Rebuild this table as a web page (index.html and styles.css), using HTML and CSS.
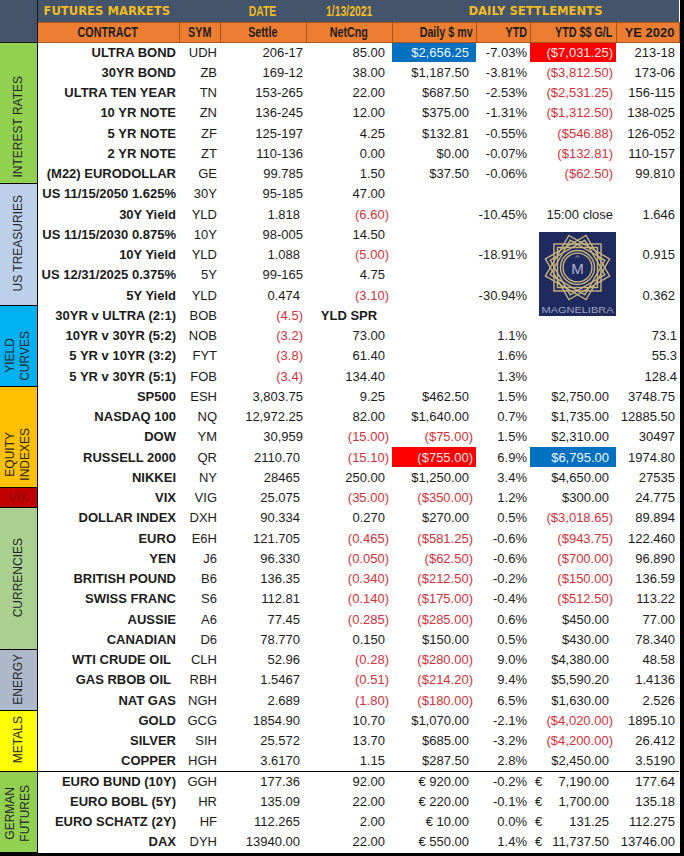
FILE: index.html
```html
<!DOCTYPE html>
<html lang="en">
<head>
<meta charset="utf-8">
<title>Futures Markets - Daily Settlements</title>
<link rel="stylesheet" href="styles.css">
</head>
<body>
<div class="sheet">
<table class="grid">
<colgroup>
<col class="w-side"><col class="w-con"><col class="w-sym"><col class="w-set"><col class="w-net"><col class="w-day"><col class="w-ytd"><col class="w-gl"><col class="w-ye">
</colgroup>
<thead>
<tr class="title">
<td class="corner" rowspan="2"></td>
<td class="tl">FUTURES MARKETS</td>
<td></td>
<td class="tc"><span class="nx mid">DATE</span></td>
<td class="tc"><span class="nx mid">1/13/2021</span></td>
<td class="tc" colspan="4">DAILY SETTLEMENTS</td>
</tr>
<tr class="head">
<td class="hc"><span class="nx mid">CONTRACT</span></td>
<td class="hc"><span class="nx mid">SYM</span></td>
<td class="hc"><span class="nx mid">Settle</span></td>
<td class="hc"><span class="nx mid">NetCng</span></td>
<td><span class="nx">Daily $ mv</span></td>
<td><span class="nx">YTD</span></td>
<td><span class="nx">YTD $$ G/L</span></td>
<td class="hy">YE 2020</td>
</tr>
</thead>
<tbody>
<tr>
<td class="sb ir bot" rowspan="7"><span class="vt">INTEREST RATES</span></td>
<td class="c">ULTRA BOND</td><td>UDH</td><td>206-17</td><td class="a">85.00</td><td class="a hb">$2,656.25</td><td>-7.03%</td><td class="n hr">($7,031.25)</td><td class="y">213-18</td>
</tr>
<tr><td class="c">30YR BOND</td><td>ZB</td><td>169-12</td><td class="a">38.00</td><td class="a">$1,187.50</td><td>-3.81%</td><td class="n">($3,812.50)</td><td class="y">173-06</td></tr>
<tr><td class="c">ULTRA TEN YEAR</td><td>TN</td><td>153-265</td><td class="a">22.00</td><td class="a">$687.50</td><td>-2.53%</td><td class="n">($2,531.25)</td><td class="y">156-115</td></tr>
<tr><td class="c">10 YR NOTE</td><td>ZN</td><td>136-245</td><td class="a">12.00</td><td class="a">$375.00</td><td>-1.31%</td><td class="n">($1,312.50)</td><td class="y">138-025</td></tr>
<tr><td class="c">5 YR NOTE</td><td>ZF</td><td>125-197</td><td class="a">4.25</td><td class="a">$132.81</td><td>-0.55%</td><td class="n">($546.88)</td><td class="y">126-052</td></tr>
<tr><td class="c">2 YR NOTE</td><td>ZT</td><td>110-136</td><td class="a">0.00</td><td class="a">$0.00</td><td>-0.07%</td><td class="n">($132.81)</td><td class="y">110-157</td></tr>
<tr><td class="c">(M22) EURODOLLAR</td><td>GE</td><td>99.785</td><td class="a">1.50</td><td class="a">$37.50</td><td>-0.06%</td><td class="n">($62.50)</td><td class="y">99.810</td></tr>

<tr>
<td class="sb ust" rowspan="6"><span class="vt">US TREASURIES</span></td>
<td class="c">US 11/15/2050 1.625%</td><td>30Y</td><td>95-185</td><td class="a">47.00</td><td></td><td></td><td></td><td></td>
</tr>
<tr><td class="c">30Y Yield</td><td>YLD</td><td class="q">1.818</td><td class="n">(6.60)</td><td></td><td>-10.45%</td><td class="note">15:00 close</td><td class="y">1.646</td></tr>
<tr><td class="c">US 11/15/2030 0.875%</td><td>10Y</td><td>98-005</td><td class="a">14.50</td><td></td><td></td><td></td><td></td></tr>
<tr><td class="c">10Y Yield</td><td>YLD</td><td class="q">1.088</td><td class="n">(5.00)</td><td></td><td>-18.91%</td><td></td><td class="y">0.915</td></tr>
<tr><td class="c">US 12/31/2025 0.375%</td><td>5Y</td><td>99-165</td><td class="a">4.75</td><td></td><td></td><td></td><td></td></tr>
<tr><td class="c">5Y Yield</td><td>YLD</td><td class="q">0.474</td><td class="n">(3.10)</td><td></td><td>-30.94%</td><td></td><td class="y">0.362</td></tr>

<tr>
<td class="sb yc bot2" rowspan="4"><span class="vt two">YIELD<br>CURVES</span></td>
<td class="c">30YR v ULTRA (2:1)</td><td>BOB</td><td class="n">(4.5)</td><td class="ys">YLD SPR</td><td></td><td></td><td></td><td></td>
</tr>
<tr><td class="c">10YR v 30YR (5:2)</td><td>NOB</td><td class="n">(3.2)</td><td class="a">73.00</td><td></td><td>1.1%</td><td></td><td class="yw">73.1</td></tr>
<tr><td class="c">5 YR v 10YR (3:2)</td><td>FYT</td><td class="n">(3.8)</td><td class="a">61.40</td><td></td><td>1.6%</td><td></td><td class="yw">55.3</td></tr>
<tr><td class="c">5 YR v 30YR (5:1)</td><td>FOB</td><td class="n">(3.4)</td><td class="a">134.40</td><td></td><td>1.3%</td><td></td><td class="yw">128.4</td></tr>

<tr>
<td class="sb eq bot" rowspan="5"><span class="vt two">EQUITY<br>INDEXES</span></td>
<td class="c">SP500</td><td>ESH</td><td>3,803.75</td><td class="a">9.25</td><td class="a">$462.50</td><td>1.5%</td><td class="a">$2,750.00</td><td class="y">3748.75</td>
</tr>
<tr><td class="c">NASDAQ 100</td><td>NQ</td><td>12,972.25</td><td class="a">82.00</td><td class="a">$1,640.00</td><td>0.7%</td><td class="a">$1,735.00</td><td class="y">12885.50</td></tr>
<tr><td class="c">DOW</td><td>YM</td><td>30,959</td><td class="n">(15.00)</td><td class="n">($75.00)</td><td>1.5%</td><td class="a">$2,310.00</td><td class="y">30497</td></tr>
<tr><td class="c">RUSSELL 2000</td><td>QR</td><td class="q">2110.70</td><td class="n">(15.10)</td><td class="n hr">($755.00)</td><td>6.9%</td><td class="a hb">$6,795.00</td><td class="y">1974.80</td></tr>
<tr><td class="c">NIKKEI</td><td>NY</td><td class="q">28465</td><td class="a">250.00</td><td class="a">$1,250.00</td><td>3.4%</td><td class="a">$4,650.00</td><td class="y">27535</td></tr>

<tr>
<td class="sb vix">VIX</td>
<td class="c">VIX</td><td>VIG</td><td class="q">25.075</td><td class="n">(35.00)</td><td class="n">($350.00)</td><td>1.2%</td><td class="a">$300.00</td><td class="y">24.775</td>
</tr>

<tr>
<td class="sb cur" rowspan="7"><span class="vt">CURRENCIES</span></td>
<td class="c">DOLLAR INDEX</td><td>DXH</td><td class="q">90.334</td><td class="a">0.270</td><td class="a">$270.00</td><td>0.5%</td><td class="n">($3,018.65)</td><td class="y">89.894</td>
</tr>
<tr><td class="c">EURO</td><td>E6H</td><td class="q">121.705</td><td class="n">(0.465)</td><td class="n">($581.25)</td><td>-0.6%</td><td class="n">($943.75)</td><td class="y">122.460</td></tr>
<tr><td class="c">YEN</td><td>J6</td><td class="q">96.330</td><td class="n">(0.050)</td><td class="n">($62.50)</td><td>-0.6%</td><td class="n">($700.00)</td><td class="y">96.890</td></tr>
<tr><td class="c">BRITISH POUND</td><td>B6</td><td class="q">136.35</td><td class="n">(0.340)</td><td class="n">($212.50)</td><td>-0.2%</td><td class="n">($150.00)</td><td class="y">136.59</td></tr>
<tr><td class="c">SWISS FRANC</td><td>S6</td><td class="q">112.81</td><td class="n">(0.140)</td><td class="n">($175.00)</td><td>-0.4%</td><td class="n">($512.50)</td><td class="y">113.22</td></tr>
<tr><td class="c">AUSSIE</td><td>A6</td><td class="q">77.45</td><td class="n">(0.285)</td><td class="n">($285.00)</td><td>0.6%</td><td class="a">$450.00</td><td class="y">77.00</td></tr>
<tr><td class="c">CANADIAN</td><td>D6</td><td class="q">78.770</td><td class="a">0.150</td><td class="a">$150.00</td><td>0.5%</td><td class="a">$430.00</td><td class="y">78.340</td></tr>

<tr>
<td class="sb en" rowspan="3"><span class="vt">ENERGY</span></td>
<td class="c cx">WTI CRUDE OIL</td><td>CLH</td><td class="q">52.96</td><td class="n">(0.28)</td><td class="n">($280.00)</td><td>9.0%</td><td class="a">$4,380.00</td><td class="y">48.58</td>
</tr>
<tr><td class="c cx">GAS RBOB OIL</td><td>RBH</td><td class="q">1.5467</td><td class="n">(0.51)</td><td class="n">($214.20)</td><td>9.4%</td><td class="a">$5,590.20</td><td class="y">1.4136</td></tr>
<tr><td class="c">NAT GAS</td><td>NGH</td><td class="q">2.689</td><td class="n">(1.80)</td><td class="n">($180.00)</td><td>6.5%</td><td class="a">$1,630.00</td><td class="y">2.526</td></tr>

<tr>
<td class="sb me" rowspan="3"><span class="vt">METALS</span></td>
<td class="c">GOLD</td><td>GCG</td><td class="q">1854.90</td><td class="a">10.70</td><td class="a">$1,070.00</td><td>-2.1%</td><td class="n">($4,020.00)</td><td class="y">1895.10</td>
</tr>
<tr><td class="c">SILVER</td><td>SIH</td><td class="q">25.572</td><td class="a">13.70</td><td class="a">$685.00</td><td>-3.2%</td><td class="n">($4,200.00)</td><td class="y">26.412</td></tr>
<tr class="cut"><td class="c">COPPER</td><td>HGH</td><td class="q">3.6170</td><td class="a">1.15</td><td class="a">$287.50</td><td>2.8%</td><td class="a">$2,450.00</td><td class="y">3.5190</td></tr>

<tr>
<td class="sb de bot3" rowspan="4"><span class="vt two">GERMAN<br>FUTURES</span></td>
<td class="c">EURO BUND (10Y)</td><td>GGH</td><td class="q">177.36</td><td class="a">92.00</td><td class="a">€ 920.00</td><td>-0.2%</td><td class="a"><span class="eur">€</span>7,190.00</td><td class="y">177.64</td>
</tr>
<tr><td class="c">EURO BOBL (5Y)</td><td>HR</td><td class="q">135.09</td><td class="a">22.00</td><td class="a">€ 220.00</td><td>-0.1%</td><td class="a"><span class="eur">€</span>1,700.00</td><td class="y">135.18</td></tr>
<tr><td class="c">EURO SCHATZ (2Y)</td><td>HF</td><td class="q">112.265</td><td class="a">2.00</td><td class="a">€ 10.00</td><td>0.0%</td><td class="a"><span class="eur">€</span>131.25</td><td class="y">112.275</td></tr>
<tr><td class="c">DAX</td><td>DYH</td><td class="q">13940.00</td><td class="a">22.00</td><td class="a">€ 550.00</td><td>1.4%</td><td class="a"><span class="eur">€</span>11,737.50</td><td class="y">13746.00</td></tr>
</tbody>
</table>

<svg class="logo" viewBox="0 0 77 84" width="77" height="84" aria-label="Magnelibra logo">
<rect width="77" height="84" fill="#1f2b5e"/>
<g fill="none" stroke="#c9b47e" stroke-width="1.4" transform="translate(38.5 35.5)">
<g id="sq">
<rect x="-23.5" y="-23.5" width="47" height="47"/>
<rect x="-20" y="-20" width="40" height="40"/>
</g>
<use href="#sq" transform="rotate(30)"/>
<use href="#sq" transform="rotate(60)"/>
<circle r="17"/>
<circle r="14.4"/>
<path d="M-1.6 -10 a1.6 1.6 0 1 1 3.2 0" stroke="#aeb2cf" stroke-width="0.8"/>
</g>
<text x="38.5" y="42" text-anchor="middle" class="lm">M</text>
<text x="38.5" y="81" text-anchor="middle" class="ln" textLength="72" lengthAdjust="spacingAndGlyphs">MAGNELIBRA</text>
</svg>
</div>
</body>
</html>
```
FILE: styles.css
```css
html, body {
  margin: 0;
  padding: 0;
  background: #000;
}

.sheet {
  position: relative;
  width: 679px;
}

.grid {
  border-collapse: collapse;
  table-layout: fixed;
  width: 679px;
  background: #fff;
  font-family: "Liberation Sans", Arial, sans-serif;
  font-size: 13px;
  color: #1c1c1c;
}

.w-side { width: 37px; }
.w-con { width: 142px; }
.w-sym { width: 41px; }
.w-set { width: 86px; }
.w-net { width: 86px; }
.w-day { width: 84px; }
.w-ytd { width: 54px; }
.w-gl { width: 86px; }
.w-ye { width: 63px; }

.grid td {
  padding: 0 3px 0 0;
  text-align: right;
  white-space: nowrap;
  overflow: hidden;
  line-height: 1;
}

/* condensed header lettering */
.nx {
  display: inline-block;
  transform: scaleX(0.74);
  transform-origin: right center;
}
.nx.mid { transform-origin: center center; }

/* title bar */
.title { height: 22px; }
.grid .title td {
  background: #44546a;
  color: #f2bb22;
  font-family: "DejaVu Sans", "Liberation Sans", sans-serif;
  font-weight: bold;
  font-size: 11.6px;
  padding-top: 2px;
  overflow: visible;
}
.grid .title .tl {
  text-align: left;
  padding-left: 6px;
}
.grid .title .tc {
  text-align: center;
  padding-right: 0;
}
.title .nx {
  font-family: "Liberation Sans", sans-serif;
  font-size: 14px;
}
.grid .corner {
  background: #44546a;
  border-bottom: 1px solid #1a1a1a;
  border-right: 1px solid #1a1a1a;
}

/* column header row */
.head { height: 20px; }
.head td {
  background: #ed7d31;
  border: 1px solid #a9541f;
  color: #1e1e1e;
  font-weight: bold;
  font-size: 14.5px;
}
.grid .head .hc {
  text-align: center;
  padding-right: 0;
}
.grid .head .hy {
  font-size: 13px;
  padding-right: 4px;
}

/* data rows */
tbody tr { height: 20.25px; }

.grid .c {
  font-weight: bold;
  padding-right: 3px;
}
.grid .cx { padding-right: 8px; }
.grid .q { padding-right: 6px; }
.grid .a { padding-right: 7px; }
.grid .n {
  color: #d33139;
  padding-right: 3px;
}
.grid .y { padding-right: 4px; }
.grid .yw { padding-right: 2px; }
.grid .note { padding-right: 3px; }
.grid .ys {
  text-align: center;
  font-weight: bold;
  padding-right: 0;
}
.grid .hb {
  background: #0070c0;
  color: #f2f6ff;
}
.grid .hr {
  background: #ff0000;
  color: #ffe6e6;
}
.eur {
  float: left;
  padding-left: 5px;
}
.cut td { border-bottom: 1px solid #000; }

/* sidebar categories */
.grid .sb {
  padding: 0;
  text-align: center;
  vertical-align: middle;
  border-right: 1px solid #000;
  border-bottom: 1px solid #000;
  font-size: 12px;
  color: #262626;
  font-weight: normal;
}
.grid .bot { vertical-align: bottom; padding-bottom: 4px; }
.grid .bot2 { vertical-align: bottom; padding-bottom: 3px; }
.grid .bot3 { vertical-align: bottom; padding-bottom: 8px; }

.vt {
  display: inline-block;
  writing-mode: vertical-rl;
  transform: rotate(180deg);
  line-height: 1;
}
.vt.two { line-height: 15px; }

.ir { background: #92d050; }
.ust { background: #bdd0ea; }
.yc { background: #00b0f0; }
.eq { background: #ffc000; }
.grid .vix {
  background: #c00000;
  color: #8a0c0c;
}
.cur { background: #a9d08e; }
.en { background: #adb9ca; }
.me { background: #ffff00; }
.de { background: #92d050; }

/* logo overlay */
.logo {
  position: absolute;
  left: 539px;
  top: 232px;
  display: block;
}
.lm {
  font-family: "Liberation Sans", sans-serif;
  font-size: 15px;
  fill: #aeb2cf;
}
.ln {
  font-family: "Liberation Sans", sans-serif;
  font-size: 9px;
  fill: #9ea2c2;
}
```
